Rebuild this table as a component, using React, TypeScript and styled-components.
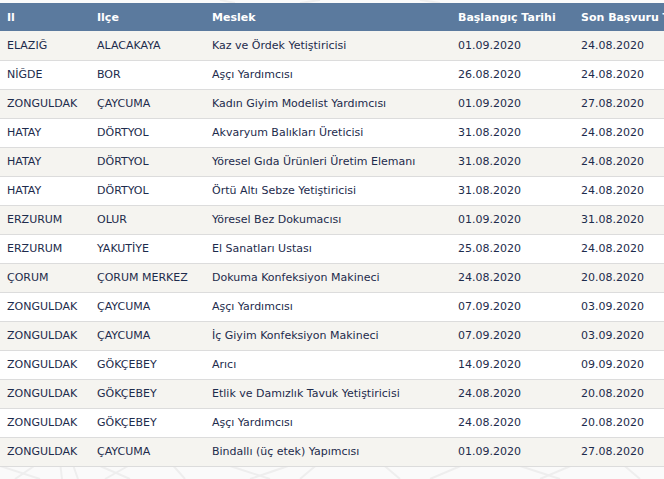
import React from "react";
import styled, { createGlobalStyle } from "styled-components";

const GlobalStyle = createGlobalStyle`
  html, body {
    margin: 0;
    padding: 0;
    background: #fafafa;
    overflow: hidden;
  }
  body {
    font-family: "DejaVu Sans", Verdana, sans-serif;
  }
`;

const Page = styled.div`
  position: relative;
  width: 664px;
  height: 479px;
  overflow: hidden;
  padding-top: 3px;
  box-sizing: border-box;
`;

const Backdrop = styled.svg`
  position: absolute;
  inset: 0;
  width: 664px;
  height: 479px;
  z-index: 0;
`;

const TableWrap = styled.div`
  position: relative;
  z-index: 1;
  width: 664px;
  overflow: hidden;
`;

const Table = styled.table`
  border-collapse: collapse;
  table-layout: fixed;
  width: 720px;
  font-size: 11px;
`;

const HeadCell = styled.th<{ $w: number }>`
  width: ${(p) => p.$w}px;
  height: 28px;
  padding: 0 0 0 7px;
  box-sizing: border-box;
  background: #5b7a9e;
  color: #ffffff;
  font-weight: bold;
  text-align: left;
  white-space: nowrap;
  overflow: hidden;
`;

const Row = styled.tr<{ $odd: boolean }>`
  background: ${(p) => (p.$odd ? "#f5f4f0" : "#ffffff")};
  border-bottom: 1px solid #dcdcdc;
`;

const Cell = styled.td`
  height: 29px;
  padding: 0 0 0 7px;
  box-sizing: border-box;
  color: #1d2b4c;
  white-space: nowrap;
  overflow: hidden;
`;

const cols = [
  { label: "Il", w: 90 },
  { label: "Ilçe", w: 115 },
  { label: "Meslek", w: 246 },
  { label: "Başlangıç Tarihi", w: 123 },
  { label: "Son Başvuru Tarihi", w: 146 },
];

const rows: string[][] = [
  ["ELAZIĞ", "ALACAKAYA", "Kaz ve Ördek Yetiştiricisi", "01.09.2020", "24.08.2020"],
  ["NİĞDE", "BOR", "Aşçı Yardımcısı", "26.08.2020", "24.08.2020"],
  ["ZONGULDAK", "ÇAYCUMA", "Kadın Giyim Modelist Yardımcısı", "01.09.2020", "27.08.2020"],
  ["HATAY", "DÖRTYOL", "Akvaryum Balıkları Üreticisi", "31.08.2020", "24.08.2020"],
  ["HATAY", "DÖRTYOL", "Yöresel Gıda Ürünleri Üretim Elemanı", "31.08.2020", "24.08.2020"],
  ["HATAY", "DÖRTYOL", "Örtü Altı Sebze Yetiştiricisi", "31.08.2020", "24.08.2020"],
  ["ERZURUM", "OLUR", "Yöresel Bez Dokumacısı", "01.09.2020", "31.08.2020"],
  ["ERZURUM", "YAKUTİYE", "El Sanatları Ustası", "25.08.2020", "24.08.2020"],
  ["ÇORUM", "ÇORUM MERKEZ", "Dokuma Konfeksiyon Makineci", "24.08.2020", "20.08.2020"],
  ["ZONGULDAK", "ÇAYCUMA", "Aşçı Yardımcısı", "07.09.2020", "03.09.2020"],
  ["ZONGULDAK", "ÇAYCUMA", "İç Giyim Konfeksiyon Makineci", "07.09.2020", "03.09.2020"],
  ["ZONGULDAK", "GÖKÇEBEY", "Arıcı", "14.09.2020", "09.09.2020"],
  ["ZONGULDAK", "GÖKÇEBEY", "Etlik ve Damızlık Tavuk Yetiştiricisi", "24.08.2020", "20.08.2020"],
  ["ZONGULDAK", "GÖKÇEBEY", "Aşçı Yardımcısı", "24.08.2020", "20.08.2020"],
  ["ZONGULDAK", "ÇAYCUMA", "Bindallı (üç etek) Yapımcısı", "01.09.2020", "27.08.2020"],
];

export default function App() {
  return (
    <>
      <GlobalStyle />
      <Page>
        <Backdrop viewBox="0 0 664 479" aria-hidden>
          <g stroke="#eeeeee" strokeWidth="2" fill="none">
            <path d="M0 466 L40 479" />
            <path d="M15 479 L40 462" />
            <path d="M62 479 L60 462" />
            <path d="M72 462 L78 479" />
            <path d="M100 466 L130 479" />
            <path d="M105 479 L135 462" />
            <path d="M170 462 L185 479" />
            <path d="M230 466 L270 479" />
            <path d="M250 479 L300 462" />
            <path d="M300 479 L320 462" />
            <path d="M380 462 L400 479" />
            <path d="M430 479 L470 462" />
            <path d="M520 466 L560 479" />
            <path d="M540 479 L580 462" />
            <path d="M620 462 L640 479" />
            <path d="M220 0 L235 3" />
            <path d="M300 3 L320 0" />
            <path d="M420 0 L440 3" />
          </g>
        </Backdrop>
        <TableWrap>
          <Table>
            <thead>
              <tr>
                {cols.map((c) => (
                  <HeadCell key={c.label} $w={c.w}>
                    {c.label}
                  </HeadCell>
                ))}
              </tr>
            </thead>
            <tbody>
              {rows.map((r, i) => (
                <Row key={i} $odd={i % 2 === 0}>
                  {r.map((v, j) => (
                    <Cell key={j}>{v}</Cell>
                  ))}
                </Row>
              ))}
            </tbody>
          </Table>
        </TableWrap>
      </Page>
    </>
  );
}
